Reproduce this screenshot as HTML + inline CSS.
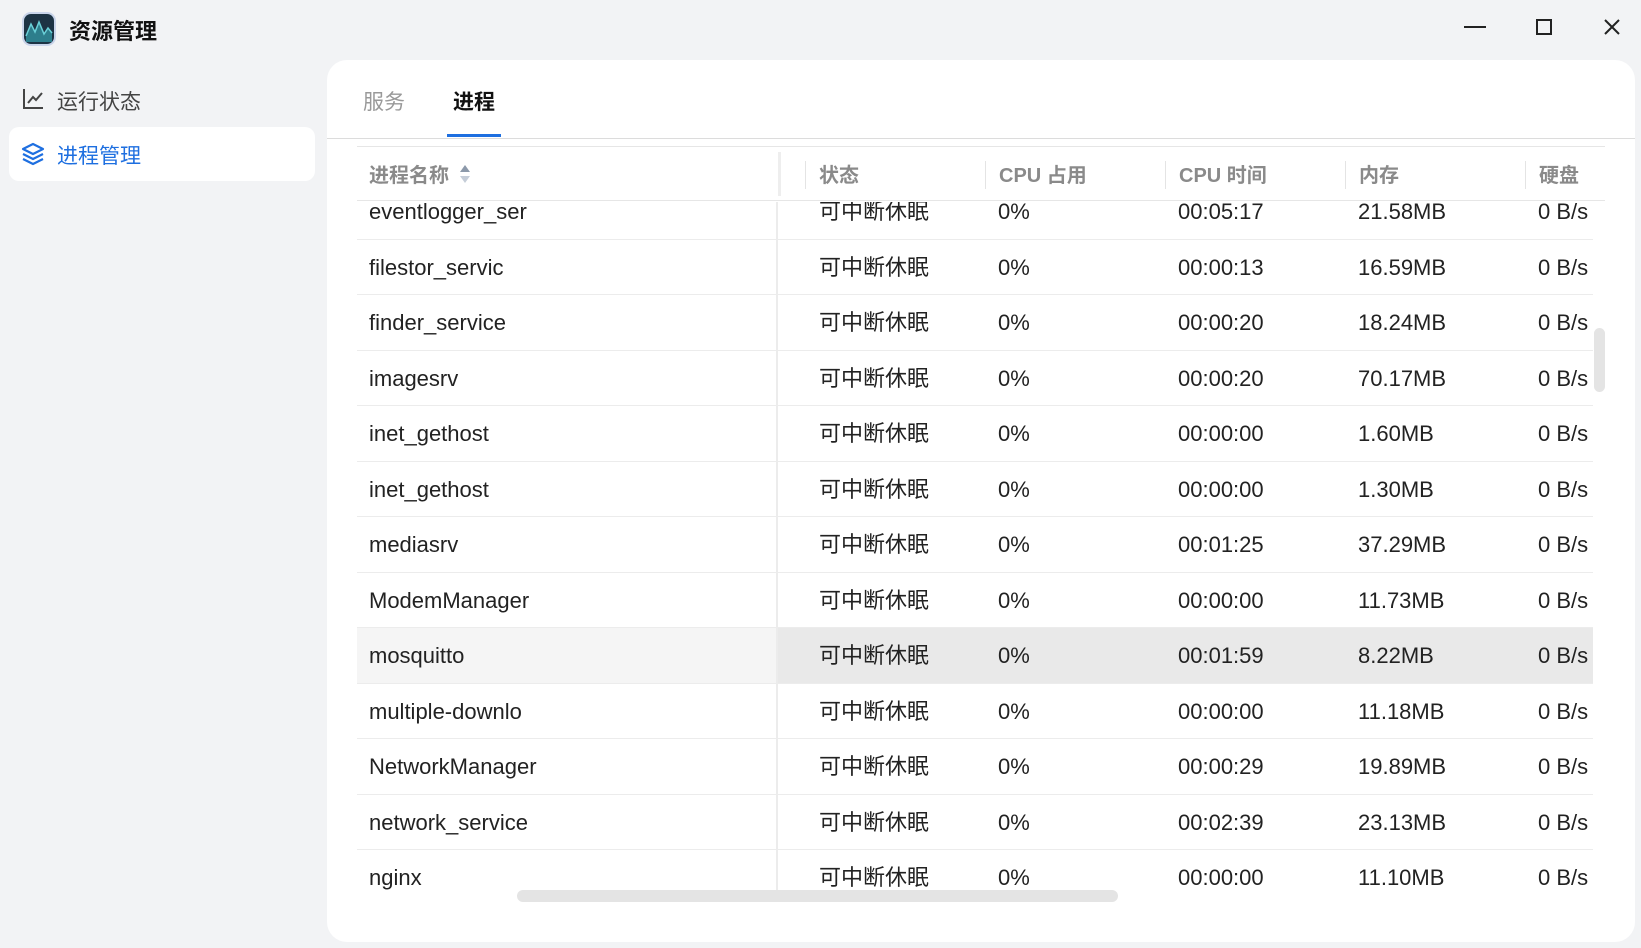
<!DOCTYPE html>
<html><head><meta charset="utf-8"><style>
*{margin:0;padding:0;box-sizing:border-box}
body{width:1641px;height:948px;background:#f2f3f5;font-family:"Liberation Sans","Noto Sans CJK SC",sans-serif;position:relative;overflow:hidden;color:#222}
.abs{position:absolute}
.card{left:327px;top:60px;width:1308px;height:882px;background:#fff;border-radius:20px}
.row{position:absolute;left:357px;width:1236px;height:55.5px;border-bottom:1px solid #ececec;font-size:22px}
.row span{position:absolute;top:0;line-height:55px;white-space:nowrap}
.hdr span{position:absolute;font-size:20px;font-weight:bold;color:#8a8a8a;line-height:58px}
.vd{position:absolute;top:14px;width:1px;height:28px;background:#e4e4e4}
</style></head><body>
<div class="abs" style="left:22px;top:12px;width:34px;height:34px;border-radius:9px;background:#c9d4ea"></div>
<svg class="abs" style="left:24px;top:14px" width="30" height="30" viewBox="0 0 30 30"><rect width="30" height="30" rx="7" fill="#1d3344"/><path d="M2 22 L7 10 L11 18 L15 8 L20 20 L24 14 L28 19 L28 28 L2 28Z" fill="#2d7e8c"/><path d="M2 22 L7 10 L11 18 L15 8 L20 20 L24 14 L28 19" stroke="#6ad0d8" stroke-width="1.5" fill="none"/></svg>
<div class="abs" style="left:69px;top:14px;font-size:22px;font-weight:bold;color:#111">资源管理</div>
<div class="abs" style="left:1464px;top:26px;width:22px;height:2px;background:#222"></div>
<div class="abs" style="left:1536px;top:19px;width:16px;height:16px;border:2px solid #222"></div>
<svg class="abs" style="left:1604px;top:19px" width="16" height="16"><path d="M1 1L15 15M15 1L1 15" stroke="#222" stroke-width="2"/></svg>
<svg class="abs" style="left:22px;top:88px" width="22" height="22" viewBox="0 0 22 22" fill="none" stroke="#444" stroke-width="2"><path d="M2 1V20H21M6 15L11 9L14 12L20 5"/></svg>
<div class="abs" style="left:57px;top:86px;font-size:21px;color:#444">运行状态</div>
<div class="abs" style="left:9px;top:127px;width:306px;height:54px;background:#fff;border-radius:10px"></div>
<svg class="abs" style="left:21px;top:142px" width="24" height="24" viewBox="0 0 24 24" fill="none" stroke="#1e6fe0" stroke-width="2.2" stroke-linejoin="round"><path d="M12 2L22 7L12 12L2 7Z"/><path d="M2 12L12 17L22 12"/><path d="M2 17L12 22L22 17"/></svg>
<div class="abs" style="left:57px;top:140px;font-size:21px;color:#1e6fe0">进程管理</div>
<div class="abs card"></div>
<div class="abs" style="left:363px;top:86px;font-size:21px;color:#999">服务</div>
<div class="abs" style="left:453px;top:86px;font-size:21px;font-weight:bold;color:#111">进程</div>
<div class="abs" style="left:447px;top:134px;width:54px;height:3px;background:#1e6fe0"></div>
<div class="abs" style="left:327px;top:138px;width:1308px;height:1px;background:#dcdcdc"></div>
<div class="abs" style="left:357px;top:146px;width:1248px;height:1px;background:#e6e6e6"></div>
<div class="abs hdr" style="left:357px;top:147px;width:1248px;height:54px;border-bottom:1px solid #e6e6e6">
<span style="left:12px">进程名称</span>
<svg style="position:absolute;left:102px;top:17px" width="12" height="20" viewBox="0 0 12 20"><path d="M6 1L11 8H1Z" fill="#8c99aa"/><path d="M6 19L11 12H1Z" fill="#c5cdd8"/></svg>
<div class="vd" style="left:421px;width:3px;height:44px;top:5px;background:#eee"></div>
<div class="vd" style="left:448px"></div><span style="left:462px">状态</span>
<div class="vd" style="left:628px"></div><span style="left:642px">CPU 占用</span>
<div class="vd" style="left:808px"></div><span style="left:822px">CPU 时间</span>
<div class="vd" style="left:988px"></div><span style="left:1002px">内存</span>
<div class="vd" style="left:1168px"></div><span style="left:1182px">硬盘</span>
</div>
<div class="abs" style="left:357px;top:202px;width:1248px;height:688px;overflow:hidden">
<div style="position:absolute;left:0;top:-18px;width:1248px">
<div class="row" style="left:0;top:0"><span style="left:12px">eventlogger_ser</span><span style="left:462px">可中断休眠</span><span style="left:641px">0%</span><span style="left:821px">00:05:17</span><span style="left:1001px">21.58MB</span><span style="left:1181px">0 B/s</span></div>
<div class="row" style="left:0;top:55.5px"><span style="left:12px">filestor_servic</span><span style="left:462px">可中断休眠</span><span style="left:641px">0%</span><span style="left:821px">00:00:13</span><span style="left:1001px">16.59MB</span><span style="left:1181px">0 B/s</span></div>
<div class="row" style="left:0;top:111px"><span style="left:12px">finder_service</span><span style="left:462px">可中断休眠</span><span style="left:641px">0%</span><span style="left:821px">00:00:20</span><span style="left:1001px">18.24MB</span><span style="left:1181px">0 B/s</span></div>
<div class="row" style="left:0;top:166.5px"><span style="left:12px">imagesrv</span><span style="left:462px">可中断休眠</span><span style="left:641px">0%</span><span style="left:821px">00:00:20</span><span style="left:1001px">70.17MB</span><span style="left:1181px">0 B/s</span></div>
<div class="row" style="left:0;top:222px"><span style="left:12px">inet_gethost</span><span style="left:462px">可中断休眠</span><span style="left:641px">0%</span><span style="left:821px">00:00:00</span><span style="left:1001px">1.60MB</span><span style="left:1181px">0 B/s</span></div>
<div class="row" style="left:0;top:277.5px"><span style="left:12px">inet_gethost</span><span style="left:462px">可中断休眠</span><span style="left:641px">0%</span><span style="left:821px">00:00:00</span><span style="left:1001px">1.30MB</span><span style="left:1181px">0 B/s</span></div>
<div class="row" style="left:0;top:333px"><span style="left:12px">mediasrv</span><span style="left:462px">可中断休眠</span><span style="left:641px">0%</span><span style="left:821px">00:01:25</span><span style="left:1001px">37.29MB</span><span style="left:1181px">0 B/s</span></div>
<div class="row" style="left:0;top:388.5px"><span style="left:12px">ModemManager</span><span style="left:462px">可中断休眠</span><span style="left:641px">0%</span><span style="left:821px">00:00:00</span><span style="left:1001px">11.73MB</span><span style="left:1181px">0 B/s</span></div>
<div class="row" style="left:0;top:444px;background:linear-gradient(90deg,#f5f5f5 0,#f5f5f5 419px,#e9e9e9 419px)"><span style="left:12px">mosquitto</span><span style="left:462px">可中断休眠</span><span style="left:641px">0%</span><span style="left:821px">00:01:59</span><span style="left:1001px">8.22MB</span><span style="left:1181px">0 B/s</span></div>
<div class="row" style="left:0;top:499.5px"><span style="left:12px">multiple-downlo</span><span style="left:462px">可中断休眠</span><span style="left:641px">0%</span><span style="left:821px">00:00:00</span><span style="left:1001px">11.18MB</span><span style="left:1181px">0 B/s</span></div>
<div class="row" style="left:0;top:555px"><span style="left:12px">NetworkManager</span><span style="left:462px">可中断休眠</span><span style="left:641px">0%</span><span style="left:821px">00:00:29</span><span style="left:1001px">19.89MB</span><span style="left:1181px">0 B/s</span></div>
<div class="row" style="left:0;top:610.5px"><span style="left:12px">network_service</span><span style="left:462px">可中断休眠</span><span style="left:641px">0%</span><span style="left:821px">00:02:39</span><span style="left:1001px">23.13MB</span><span style="left:1181px">0 B/s</span></div>
<div class="row" style="left:0;top:666px"><span style="left:12px">nginx</span><span style="left:462px">可中断休眠</span><span style="left:641px">0%</span><span style="left:821px">00:00:00</span><span style="left:1001px">11.10MB</span><span style="left:1181px">0 B/s</span></div>
</div>
<div style="position:absolute;left:419px;top:0;width:2px;height:688px;background:#ececec"></div>
</div>
<div class="abs" style="left:1594px;top:328px;width:11px;height:64px;border-radius:6px;background:#e4e4e4"></div>
<div class="abs" style="left:517px;top:890px;width:601px;height:12px;border-radius:6px;background:#e4e4e4"></div>
</body></html>
